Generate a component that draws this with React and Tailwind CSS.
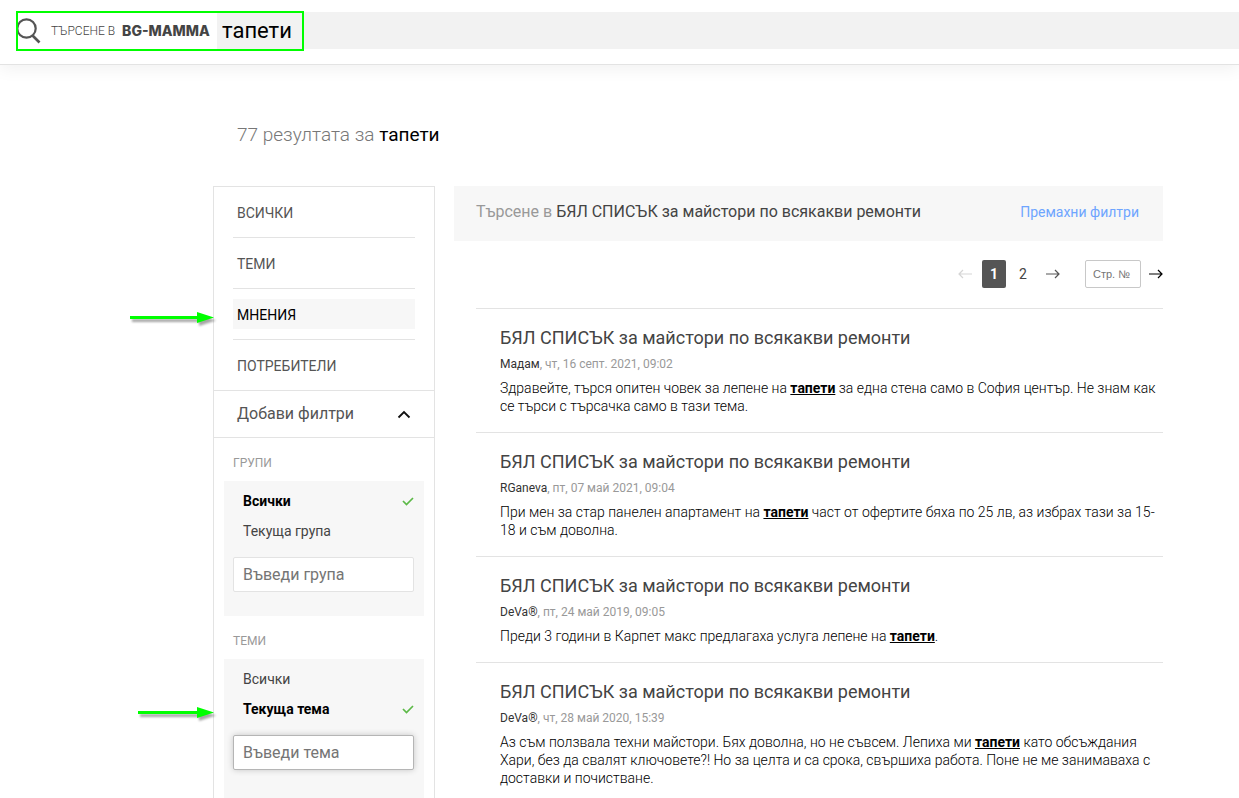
const TABS = ["ВСИЧКИ", "ТЕМИ", "МНЕНИЯ", "ПОТРЕБИТЕЛИ"];

const FILTERS = [
  {
    title: "ГРУПИ",
    options: ["Всички", "Текуща група"],
    selected: "Всички",
    placeholder: "Въведи група",
    field: "border-[#e3e3e3]",
    panel: "",
  },
  {
    title: "ТЕМИ",
    options: ["Всички", "Текуща тема"],
    selected: "Текуща тема",
    placeholder: "Въведи тема",
    field: "border-[#b5b5b5] shadow-[0_0_6px_rgba(0,0,0,0.2)]",
    panel: "grow",
  },
];

const TITLE = "БЯЛ СПИСЪК за майстори по всякакви ремонти";

const POSTS = [
  {
    author: "Мадам",
    date: "чт, 16 септ. 2021, 09:02",
    before: "Здравейте, търся опитен човек за лепене на ",
    after: " за една стена само в София център. Не знам как се търси с търсачка само в тази тема.",
  },
  {
    author: "RGaneva",
    date: "пт, 07 май 2021, 09:04",
    before: "При мен за стар панелен апартамент на ",
    after: " част от офертите бяха по 25 лв, аз избрах тази за 15-18 и съм доволна.",
  },
  {
    author: "DeVa®",
    date: "пт, 24 май 2019, 09:05",
    before: "Преди 3 години в Карпет макс предлагаха услуга лепене на ",
    after: ".",
  },
  {
    author: "DeVa®",
    date: "чт, 28 май 2020, 15:39",
    before: "Аз съм ползвала техни майстори. Бях доволна, но не съвсем. Лепиха ми ",
    after: " като обсъждания Хари, без да свалят ключовете?! Но за целта и са срока, свършиха работа. Поне не ме занимаваха с доставки и почистване.",
  },
];

const Check = () => (
  <svg width="12" height="10" viewBox="0 0 12 10" fill="none" stroke="#5cb947" strokeWidth="1.7">
    <path d="M1 5 L4.5 8.5 L11 2" />
  </svg>
);

const Arrow = ({ className }) => (
  <svg className={className} width="14" height="10" viewBox="0 0 14 10" fill="none" stroke="currentColor" strokeWidth="1.2">
    <path d="M0 5 H13 M9 1 L13 5 L9 9" />
  </svg>
);

// Green pointer with a soft shadow, drawn over the page
const Pointer = ({ className }) => (
  <svg
    className={`absolute pointer-events-none drop-shadow-[2px_3px_1px_rgba(0,0,0,0.35)] ${className}`}
    height="14" viewBox="0 0 84 14" preserveAspectRatio="xMaxYMid slice" fill="#00ff00"
  >
    <path d="M0 5 H67 V1 L84 6.5 L67 12 V8 H0 Z" />
  </svg>
);

const Header = () => (
  <header className="relative flex items-center h-[65px] pt-3 pb-[15px] pl-4 border-b border-[#e3e3e3] shadow-[0_4px_16px_rgba(0,0,0,0.06)]">
    <svg width="25" height="28" viewBox="0 0 25 28" fill="none" stroke="#555" strokeWidth="2.2">
      <circle cx="10.5" cy="11.5" r="9.2" />
      <path d="M16.5 18.5 L23.5 25.5" strokeWidth="2.6" />
    </svg>
    <label htmlFor="q" className="flex items-center gap-[7px] w-[176px] pl-[10px] pt-px text-xs font-light text-[#444] whitespace-nowrap">
      ТЪРСЕНЕ В
      <span className="font-[Inter] font-extrabold text-sm text-[#444]">BG-MAMMA</span>
    </label>
    <input
      id="q"
      defaultValue="тапети"
      className="grow min-w-0 h-[37px] px-[5px] bg-[#f2f2f2] text-[22px] text-black outline-none"
    />
    <div className="absolute left-4 top-[11px] w-72 h-10 border-2 border-[#00ff00] pointer-events-none" />
  </header>
);

const Sidebar = () => (
  <aside className="relative flex flex-col w-[222px] shrink-0 border border-b-0 border-[#e3e3e3]">
    <nav className="px-[19px] divide-y divide-[#e3e3e3]">
      {TABS.map((tab) => (
        <div key={tab} className="py-[10px]">
          <a
            href="#"
            className={`block h-[30px] px-1 pt-px text-sm leading-[30px] ${tab === "МНЕНИЯ" ? "bg-[#f7f7f7] text-black" : "text-[#555]"}`}
          >
            {tab}
          </a>
        </div>
      ))}
    </nav>
    <button className="flex items-center justify-between h-12 pl-[23px] pr-[23px] border-y border-[#e3e3e3] text-base text-[#555]">
      Добави филтри
      <svg width="14" height="9" viewBox="0 0 14 9" fill="none" stroke="#111" strokeWidth="1.8">
        <path d="M1.5 7.5 L7 2 L12.5 7.5" />
      </svg>
    </button>
    {FILTERS.map((f) => (
      <section key={f.title} className={`flex flex-col px-[10px] ${f.panel}`}>
        <h3 className="pl-[9px] pt-4 pb-[9px] text-xs leading-[18px] text-[#999]">{f.title}</h3>
        <div className={`pl-[9px] pr-[10px] pt-[5px] pb-6 bg-[#f7f7f7] ${f.panel}`}>
          {f.options.map((o) => (
            <button
              key={o}
              className={`flex items-center justify-between w-full h-[30px] pl-[10px] text-sm ${o === f.selected ? "font-bold text-black" : "text-[#444]"}`}
            >
              {o}
              {o === f.selected && <Check />}
            </button>
          ))}
          <input
            aria-label={f.placeholder}
            placeholder={f.placeholder}
            className={`w-full h-[35px] mt-[11px] px-[9px] bg-white border rounded-xs text-base placeholder:text-[#757575] outline-none ${f.field}`}
          />
        </div>
      </section>
    ))}
    <Pointer className="-left-[84px] top-[124px] w-[84px]" />
    <Pointer className="-left-[76px] top-[519px] w-[76px]" />
  </aside>
);

const Pagination = () => (
  <nav className="flex items-center justify-end h-7 mt-[19px] mb-5">
    <button aria-label="Предишна" className="text-[#d5d5d5]">
      <Arrow className="rotate-180" />
    </button>
    <a href="#" className="w-6 ml-[10px] rounded-xs bg-[#555] text-center text-sm font-bold leading-7 text-white">1</a>
    <a href="#" className="w-6 ml-[5px] text-center text-sm leading-7 text-[#444]">2</a>
    <button aria-label="Следваща" className="ml-[11px] text-[#555]">
      <Arrow />
    </button>
    <input
      aria-label="Стр. №"
      placeholder="Стр. №"
      className="w-14 h-7 ml-[25px] px-[7px] border border-[#c8c8c8] rounded-xs font-['Liberation_Sans',sans-serif] text-[11px] placeholder:text-[#757575] outline-none"
    />
    <button aria-label="Отиди" className="ml-2 text-black">
      <Arrow />
    </button>
  </nav>
);

const Post = ({ author, date, before, after }) => (
  <article className="pt-[17px] pb-[17px] pl-6 border-t border-[#e3e3e3]">
    <h2 className="text-lg leading-6 text-[#444]">{TITLE}</h2>
    <p className="mt-[5px] text-xs leading-[18px] text-[#999]">
      <a href="#" className="text-[#333]">{author}</a>, {date}
    </p>
    <p className="mt-[6px] text-sm leading-[18px] font-light text-black">
      {before}
      <b className="font-bold underline">тапети</b>
      {after}
    </p>
  </article>
);

export default function App() {
  return (
    <div className="min-h-screen bg-white font-[Roboto,sans-serif]">
      <Header />
      <div className="pl-[213px] pr-[76px]">
        <h1 className="pt-[58px] pb-[39px] pl-6 text-[19px] leading-6 font-light text-[#777]">
          77 резултата за <span className="font-normal text-black">тапети</span>
        </h1>
        <div className="flex gap-[19px]">
          <Sidebar />
          <main className="grow min-w-0">
            <div className="flex items-center justify-between h-[55px] pl-[22px] pr-6 pb-[3px] bg-[#f7f7f7]">
              <p className="text-base text-[#999]">
                Търсене в <span className="text-[#444]">{TITLE}</span>
              </p>
              <a href="#" className="text-sm text-[#6ea5ff]">Премахни филтри</a>
            </div>
            <div className="pl-[22px]">
              <Pagination />
              {POSTS.map((p) => (
                <Post key={p.date} {...p} />
              ))}
            </div>
          </main>
        </div>
      </div>
    </div>
  );
}
